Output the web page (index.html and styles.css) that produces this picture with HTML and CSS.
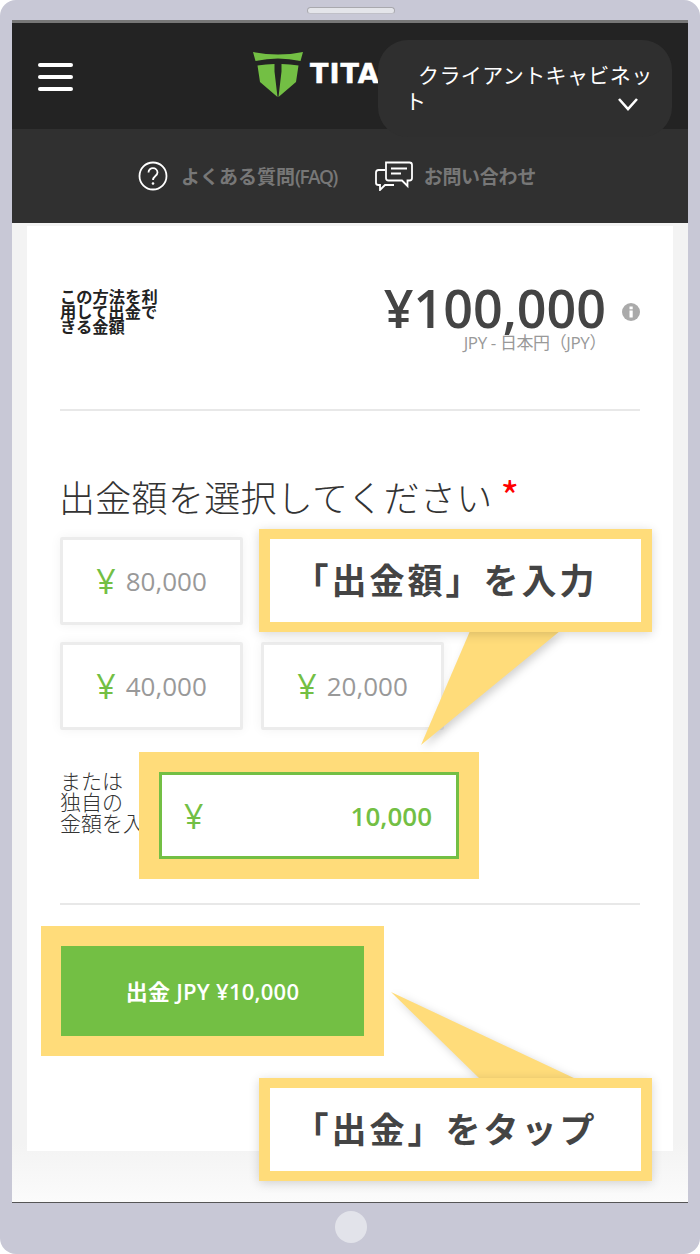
FILE: index.html
```html
<!DOCTYPE html>
<html lang="ja">
<head>
<meta charset="utf-8">
<title>出金</title>
<link rel="stylesheet" href="styles.css">
</head>
<body>
<div class="device">
  <div class="top-bezel"><span class="speaker"></span></div>
  <div class="screen">
    <header class="header">
      <button class="burger" aria-label="menu"><span></span><span></span><span></span></button>
      <div class="brand">
        <svg class="logo" viewBox="0 0 50 46" width="50" height="46">
          <path fill="#73bf44" d="M0 0Q25 5 50 0L47.500 9Q25 4 2.500 9Z"/>
          <path fill="#73bf44" d="M4.500 13.500Q13 12 21.500 12V19.500L24.500 45L7 30Z"/>
          <path fill="#73bf44" d="M45.500 13.500Q37 12 28.500 12V19.500L25.500 45L43 30Z"/>
        </svg>
        <span class="brand-name">TITAN</span>
      </div>
      <div class="account">
        <span class="account-text">クライアントキャビネット</span>
        <svg class="chevron" viewBox="0 0 22 14" width="22" height="14"><path d="M2 2L11 12L20 2" fill="none" stroke="#fff" stroke-width="2.600"/></svg>
      </div>
    </header>
    <nav class="subnav">
      <a class="subnav-item">
        <svg viewBox="0 0 30 30" width="30" height="30"><circle cx="15" cy="15" r="13.500" fill="none" stroke="#fff" stroke-width="1.800"/><path d="M10.500 11.500C10.500 5.500 19.500 6 19.500 11.500C19.500 15 15 15 15 19" fill="none" stroke="#fff" stroke-width="1.800"/><circle cx="15" cy="22.500" r="1.300" fill="#fff"/></svg>
        <span class="subnav-text">よくある質問<span class="faq">(FAQ)</span></span>
      </a>
      <a class="subnav-item subnav-contact">
        <svg viewBox="0 0 38 30" width="38" height="30"><path d="M10 9H3.500Q1 9 1 11.500V22Q1 24 3.500 24H5V29L10 24H19" fill="none" stroke="#fff" stroke-width="1.800"/><path d="M11 1.500H34.500Q37 1.500 37 4V17Q37 19.500 34.500 19.500H32.500V25L27 19.500H13.500Q11 19.500 11 17Z" fill="#303030" stroke="#fff" stroke-width="1.800"/><path d="M16 7.500H32M16 12.500H26" stroke="#fff" stroke-width="1.800"/></svg>
        <span class="subnav-text">お問い合わせ</span>
      </a>
    </nav>
    <main class="content">
      <div class="card">
        <section class="summary">
          <p class="summary-label">この方法を利用して出金できる金額</p>
          <div class="balance">
            <div class="balance-row">
              <span class="balance-value">¥100,000</span>
              <svg class="info" viewBox="0 0 18 18" width="18" height="18"><circle cx="9" cy="9" r="9" fill="#aaa"/><rect x="7.500" y="7.500" width="3.200" height="7" fill="#fff"/><rect x="7.500" y="3.500" width="3.200" height="2.800" fill="#fff"/></svg>
            </div>
            <div class="balance-sub">JPY - 日本円（JPY）</div>
          </div>
        </section>
        <h2 class="title">出金額を選択してください<span class="req">*</span></h2>
        <div class="amounts">
          <div class="amount-row">
            <div class="amount"><span class="yen">¥</span><span class="num">80,000</span></div>
          </div>
          <div class="amount-row">
            <div class="amount"><span class="yen">¥</span><span class="num">40,000</span></div>
            <div class="amount"><span class="yen">¥</span><span class="num">20,000</span></div>
          </div>
        </div>
        <div class="custom">
          <p class="custom-label">または<br>独自の<br>金額を入力</p>
          <div class="mark">
            <div class="custom-input"><span class="yen">¥</span><span class="custom-value">10,000</span></div>
          </div>
        </div>
        <div class="rule"></div>
        <div class="mark mark-submit">
          <button class="submit">出金 JPY ¥10,000</button>
        </div>
        <div class="callout callout-input">
          <svg class="tail tail-input" viewBox="0 0 140 115" width="140" height="115"><path d="M49 0H139L0 114Z"/></svg>
          <div class="callout-box">「出金額」を入力</div>
        </div>
        <div class="callout callout-tap">
          <svg class="tail tail-tap" viewBox="0 0 186 88" width="186" height="88"><path d="M0 0L89 87H185Z"/></svg>
          <div class="callout-box">「出金」をタップ</div>
        </div>
      </div>
    </main>
  </div>
  <div class="bottom-bezel"><span class="home"></span></div>
</div>
</body>
</html>
```
FILE: styles.css
```css
* { box-sizing: border-box; }
html, body { margin: 0; padding: 0; background: #fff; }
body { font-family: "Open Sans", "Noto Sans CJK JP", sans-serif; }
p, h2 { margin: 0; }

.device {
  width: 700px;
  height: 1254px;
  background: #c8c8d6;
  border-radius: 16px;
  display: flex;
  flex-direction: column;
  overflow: hidden;
}
.top-bezel { height: 20px; flex: none; padding-top: 7px; display: flex; justify-content: center; }
.speaker {
  width: 88px; height: 7px; margin-left: 2px;
  background: #e4e5ea;
  border: 1px solid #a9a9ae;
  border-bottom-color: #c0c0c8;
  border-radius: 4px;
}
.screen {
  margin: 0 12px;
  width: 676px;
  height: 1183px;
  flex: none;
  display: flex;
  flex-direction: column;
  border-top: 3px solid #777;
  border-bottom: 1px solid #555;
}
.bottom-bezel { flex: 1; display: flex; justify-content: center; align-items: center; padding: 0 0 3px 2px; }
.home { width: 32px; height: 32px; border-radius: 50%; background: #e2e3ea; }

.header {
  height: 106px;
  flex: none;
  background: #232323;
  position: relative;
  display: flex;
  align-items: flex-start;
  padding: 40px 0 0 26px;
}
.burger {
  width: 35px; height: 28px; padding: 0; border: 0; background: none;
  display: flex; flex-direction: column; justify-content: space-between;
}
.burger span { display: block; height: 4px; border-radius: 2px; background: #fff; }
.brand { display: flex; align-items: flex-start; gap: 7px; margin: -11px 0 0 180px; }
.logo { display: block; flex: none; }
.brand-name {
  font: 700 27px/32px "DejaVu Sans", sans-serif;
  letter-spacing: 1px;
  -webkit-text-stroke: 0.5px #fff;
  color: #fff;
  margin-top: 6px;
  white-space: nowrap;
}
.account {
  position: absolute;
  left: 366px;
  top: 17px;
  width: 294px;
  height: 97px;
  border-radius: 30px;
  background: #2f2f2f;
  padding: 21px 16px 0 27px;
  font: 400 21px/26px "Noto Sans CJK JP", sans-serif;
  letter-spacing: 0.4px;
  color: #fff;
  text-indent: 13px;
}
.chevron { position: absolute; left: 239px; top: 57px; }

.subnav {
  height: 94px;
  flex: none;
  background: #303030;
  display: flex;
  align-items: center;
  gap: 38px;
  padding-left: 126px;
}
.subnav-item {
  display: flex;
  align-items: center;
  gap: 13px;
  font: 700 19px/30px "Open Sans", "Noto Sans CJK JP", sans-serif;
  color: #777;
}
.subnav-item svg { display: block; flex: none; }
.subnav-text { padding-top: 2px; }
.faq { font-weight: 600; letter-spacing: -1.6px; }
.subnav-contact { gap: 11px; letter-spacing: -0.3px; }

.content {
  flex: 1;
  padding: 3px 15px 0;
  background: linear-gradient(#f3f3f3 94%, #fbfbfb);
}
.card {
  position: relative;
  height: 925px;
  background: #fff;
  padding: 0 33px;
}

.summary {
  height: 185px;
  border-bottom: 2px solid #e8e8e8;
  display: flex;
  justify-content: space-between;
  padding-top: 56px;
}
.summary-label {
  width: 102px;
  margin-top: 7px;
  font: 700 16.300px/15px "Noto Sans CJK JP", sans-serif;
  color: #222;
}
.balance { display: flex; flex-direction: column; align-items: flex-end; }
.balance-row { display: flex; align-items: center; gap: 16px; height: 52px; }
.balance-value { font-weight: 600; font-size: 52px; line-height: 52px; color: #444; }
.info { display: block; margin-top: 8px; }
.balance-sub {
  margin: -1px 34px 0 0;
  font: 400 17px/20px "Open Sans", "Noto Sans CJK JP", sans-serif;
  letter-spacing: -0.4px;
  color: #999;
}

.title {
  margin: 63px 0 0 -1px;
  font: 300 36px/44px "Noto Sans CJK JP", sans-serif;
  letter-spacing: 0.3px;
  color: #333;
  white-space: nowrap;
}
.req { margin-left: 8px; font-size: 40px; line-height: 0; font-weight: 400; color: #f00; }

.amounts { margin-top: 19px; display: flex; flex-direction: column; gap: 17px; }
.amount-row { display: flex; gap: 18px; }
.amount {
  width: 183px;
  height: 88px;
  border: 3px solid #ececec;
  border-radius: 2px;
  background: #fff;
  box-shadow: 0 0 12px rgba(0, 0, 0, 0.05);
  display: flex;
  align-items: center;
  justify-content: center;
  gap: 10px;
}
.yen { font-weight: 400; font-size: 34px; line-height: 40px; color: #73bf44; }
.num { font-size: 26px; line-height: 40px; color: #999; }

.custom { margin-top: 22px; display: flex; }
.custom-label {
  width: 79px;
  flex: none;
  margin-top: 18px;
  font: 300 21px/21px "Noto Sans CJK JP", sans-serif;
  color: #333;
  white-space: nowrap;
}
.mark { position: relative; border: 20px solid #ffdc7a; background: #ffdc7a; }
.custom-input {
  width: 300px;
  height: 87px;
  border: 3px solid #73bf44;
  background: #fff;
  display: flex;
  align-items: center;
  justify-content: space-between;
  padding: 0 24px 0 22px;
}
.custom-value { font-weight: 600; font-size: 26px; color: #73bf44; }

.rule { margin-top: 24px; height: 2px; background: #e8e8e8; }

.mark-submit { display: inline-block; margin: 21px 0 0 -19px; }
.submit {
  display: block;
  width: 303px;
  height: 90px;
  border: 0;
  background: #73bf44;
  color: #fff;
  font: 600 22px/24px "Open Sans", "Noto Sans CJK JP", sans-serif;
  letter-spacing: 0.25px;
}

.callout { position: absolute; left: 232px; width: 393px; height: 103px; }
.callout-input { top: 303px; }
.callout-tap { top: 852px; }
.callout-box {
  position: relative;
  height: 103px;
  border: solid #ffdc7a;
  border-width: 10px 11px;
  padding-right: 20px;
  background: #fff;
  box-shadow: 0 2px 10px rgba(0, 0, 0, 0.16);
  text-align: center;
  font: 700 35px/79px "Noto Sans CJK JP", sans-serif;
  letter-spacing: 3px;
  color: #444;
  white-space: nowrap;
}
.tail { position: absolute; display: block; fill: #ffdc7a; filter: drop-shadow(3px 3px 4px rgba(0, 0, 0, 0.18)); }
.tail-input { left: 162px; top: 102px; }
.tail-tap { left: 132px; top: -86px; }
```
